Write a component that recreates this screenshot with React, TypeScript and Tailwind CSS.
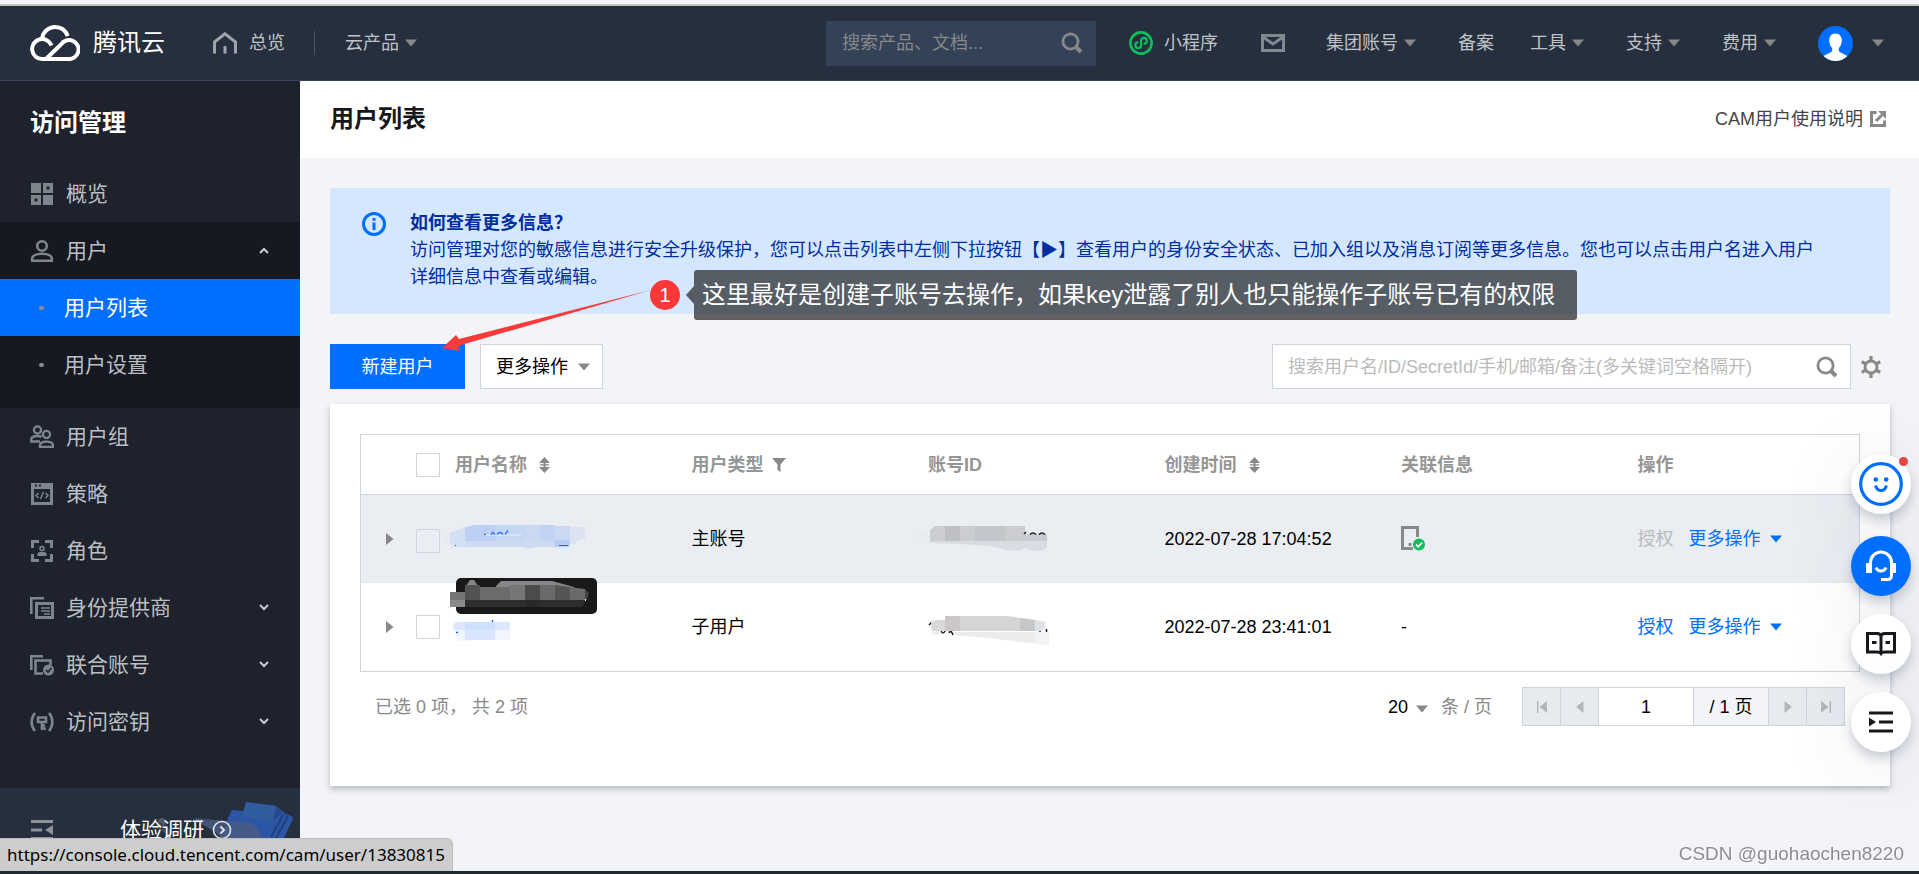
import React from "react";

function Caret({ className = "text-[#888]" }: { className?: string }) {
  return (
    <svg width="12" height="8" viewBox="0 0 12 8" className={`shrink-0 ${className}`} aria-hidden="true">
      <path d="M0 .5h12L6 7.5z" fill="currentColor" />
    </svg>
  );
}

function SearchIcon() {
  return (
    <svg width="22" height="22" viewBox="0 0 22 22" fill="none" stroke="currentColor" aria-hidden="true">
      <circle cx="9.5" cy="9.5" r="7.6" strokeWidth="2.8" />
      <path d="M15 15l5 5" strokeWidth="4" />
    </svg>
  );
}

function SortIcon() {
  return (
    <svg width="11" height="16" viewBox="0 0 11 16" fill="#888" aria-hidden="true">
      <path d="M5.5 0L11 6H0zM5.500 16L0 10h11zM4.500 5h2v6h-2zM1 7.200h9v1.400H1z" />
    </svg>
  );
}

function LogoIcon() {
  return (
    <svg width="50" height="36" viewBox="0 0 50 36" fill="none" stroke="#fff" strokeWidth="4" aria-hidden="true">
      <path d="M12 13.5C13 7 18.500 2 25 2c5.500 0 10.500 3.200 12.800 9" />
      <path d="M19.500 34H12A10 10 0 1 1 21.500 20.500" />
      <path d="M16 34L31 19.500a9.500 9.500 0 1 1 7 14.500H15" />
    </svg>
  );
}

function TopMenu({ label }: { label: string }) {
  return (
    <button type="button" className="flex items-center gap-1.5 whitespace-nowrap">
      {label}
      <Caret />
    </button>
  );
}

function TopBar() {
  return (
    <header className="flex h-[75px] shrink-0 items-center border-b border-[#36435c] bg-[#262f3e] pl-[30px] pr-[35px] text-lg text-[#bfc3c7]">
      <a href="#home" className="flex items-center gap-[13px] text-2xl text-white">
        <LogoIcon />
        腾讯云
      </a>
      <a href="#overview" className="ml-12 flex items-center gap-3">
        <svg width="24" height="22" viewBox="0 0 24 22" fill="none" stroke="#a0a4a8" strokeWidth="3" aria-hidden="true">
          <path d="M1.500 21.500V10L12 1.800 22.500 10v11.500M12 14v7.500" />
        </svg>
        总览
      </a>
      <span className="ml-[29px] mr-[30px] h-6 w-px bg-[#4d5768]" />
      <TopMenu label="云产品" />
      <div className="ml-auto flex items-center">
        <label className="flex h-[45px] w-[270px] items-center bg-[#344258] pl-4 pr-[13px] text-[#888]">
          <input
            type="search"
            aria-label="搜索产品、文档"
            placeholder="搜索产品、文档..."
            className="min-w-0 flex-1 bg-transparent outline-none placeholder:text-[#888]"
          />
          <SearchIcon />
        </label>
        <a href="#mini" className="ml-[33px] flex items-center gap-[11px]">
          <svg width="24" height="24" viewBox="0 0 24 24" fill="none" stroke="#0abf5b" aria-hidden="true">
            <circle cx="12" cy="12" r="10.600" strokeWidth="2.600" />
            <path d="M8.700 11.300a2.900 2.900 0 1 0 3.400 3.200V9.500a2.900 2.900 0 1 1 3.400 3.200" strokeWidth="2.200" strokeLinecap="round" />
          </svg>
          小程序
        </a>
        <button type="button" aria-label="消息" className="ml-[43px] mr-[41px]">
          <svg width="24" height="18" viewBox="0 0 24 18" fill="none" stroke="#7d8a8f" strokeWidth="3" aria-hidden="true">
            <path d="M1.500 1.500h21v15h-21zM2 3l10 7 10-7" />
          </svg>
        </button>
        <TopMenu label="集团账号" />
        <a href="#beian" className="ml-[42px] mr-9">备案</a>
        <div className="flex items-center gap-[42px]">
          <TopMenu label="工具" />
          <TopMenu label="支持" />
          <TopMenu label="费用" />
          <button type="button" aria-label="账号" className="flex items-center gap-[19px]">
            <svg width="35" height="35" viewBox="0 0 35 35" aria-hidden="true">
              <circle cx="17.500" cy="17.500" r="17.500" fill="#006eff" />
              <path d="M17.500 7.500c4 0 6.300 2.800 6.300 7 0 3.300-1.300 6-3 7.500v2.500c0 2 5 3 8.700 5.600a17 17 0 0 1-24 0c3.700-2.600 8.700-3.600 8.700-5.600V22c-1.700-1.500-3-4.200-3-7.500 0-4.200 2.300-7 6.300-7z" fill="#fff" />
            </svg>
            <Caret />
          </button>
        </div>
      </div>
    </header>
  );
}

const navIcons: Record<string, React.ReactNode> = {
  overview: (
    <path d="M1 1h10v10H1zM13 1h10v10H13zM16.500 4.500v3h3v-3zM1 13h10v10H1zM4.500 16.500v3h3v-3zM13 13h10v10H13z" fill="currentColor" fillRule="evenodd" />
  ),
  user: (
    <g fill="none" stroke="currentColor" strokeWidth="2.600">
      <circle cx="12" cy="7" r="4.800" />
      <path d="M2.200 21.800v-2c0-3 4-5 9.800-5s9.800 2 9.800 5v2z" />
    </g>
  ),
  group: (
    <g fill="none" stroke="currentColor" strokeWidth="2.300">
      <circle cx="7.500" cy="5" r="3.600" />
      <circle cx="16.500" cy="9.500" r="3.600" />
      <path d="M10 16.500H1.200v-1.700c0-2.500 3-3.800 6.300-3.800 1.500 0 3 .300 4 .900" />
      <path d="M10 21.800v-1.400c0-2.400 3-3.700 6.500-3.700s6.500 1.300 6.500 3.700v1.400z" />
    </g>
  ),
  policy: (
    <g>
      <path d="M1 1h22v22H1zM4 7v13h16V7z" fill="currentColor" fillRule="evenodd" />
      <path d="M5 3.500h2M9 3.500h2" stroke="#1e222d" strokeWidth="2" />
      <path d="M8.500 11L6 13.500 8.500 16M15.500 11l2.500 2.500-2.500 2.500M13.500 10l-3 7" fill="none" stroke="currentColor" strokeWidth="1.500" />
    </g>
  ),
  role: (
    <g>
      <path d="M2.500 9V2.500H9M15 2.500h6.500V9M21.500 15v6.500H15M9 21.500H2.500V15" fill="none" stroke="currentColor" strokeWidth="3" />
      <circle cx="12" cy="9.500" r="2" fill="none" stroke="currentColor" strokeWidth="1.600" />
      <path d="M7.500 17v-2c0-1.500 2-2.200 4.500-2.200s4.500.700 4.500 2.200v2z" fill="currentColor" />
    </g>
  ),
  provider: (
    <g fill="none" stroke="currentColor">
      <path d="M1.300 18V2.300H14" strokeWidth="2.600" />
      <path d="M6.500 7.500h16v14h-16z" strokeWidth="3" />
      <path d="M11 12h9M11 15h9M14 18h6" strokeWidth="1.500" />
    </g>
  ),
  union: (
    <g>
      <path d="M1.300 17V3.300H13M13 20.500H5.500V7.500h15V12" fill="none" stroke="currentColor" strokeWidth="2.600" />
      <circle cx="18.500" cy="17" r="5.500" fill="currentColor" />
      <path d="M16 17l2 2 3.500-4" fill="none" stroke="#1e222d" strokeWidth="1.600" />
    </g>
  ),
  key: (
    <g fill="none" stroke="currentColor">
      <path d="M5 3C.500 8 .500 16 5 21M19 3c4.500 5 4.500 13 0 18" strokeWidth="2.600" />
      <path d="M8 7.500h8v4.500H8z" strokeWidth="2.600" />
      <path d="M12 12v8M12 18.500h4M12 15.500h3" strokeWidth="2.600" />
    </g>
  ),
};

function Chevron({ up = false }: { up?: boolean }) {
  return (
    <svg width="10" height="8" viewBox="0 0 10 8" fill="none" stroke="#c8ccd0" strokeWidth="2" className="ml-auto" aria-hidden="true">
      <path d={up ? "M1 6l4-4 4 4" : "M1 1l4 4 4-4"} />
    </svg>
  );
}

function NavItem({ icon, label, arrow }: { icon: string; label: string; arrow?: "up" | "down" }) {
  return (
    <a href={`#${icon}`} className="flex h-[57px] items-center gap-3 pl-[30px] pr-[31px]">
      <svg width="24" height="24" viewBox="0 0 24 24" className="text-[#7d868c]" aria-hidden="true">
        {navIcons[icon]}
      </svg>
      {label}
      {arrow && <Chevron up={arrow === "up"} />}
    </a>
  );
}

function SubItem({ label, active = false }: { label: string; active?: boolean }) {
  return (
    <a
      href="#sub"
      className={`flex h-[57px] items-center gap-5 pl-[39px] ${active ? "bg-[#006eff] text-white" : ""}`}
    >
      <span className="h-1 w-[5px] rounded-full bg-[#868e94]" />
      {label}
    </a>
  );
}

function Sidebar() {
  return (
    <aside className="flex w-[300px] shrink-0 flex-col bg-[#1e222d] text-[21px] text-[#bbbfc3]">
      <h2 className="flex h-[84px] items-center pl-[30px] text-2xl font-bold text-white">访问管理</h2>
      <nav>
        <NavItem icon="overview" label="概览" />
        <div className="bg-[#161822] pb-[15px]">
          <NavItem icon="user" label="用户" arrow="up" />
          <SubItem label="用户列表" active />
          <SubItem label="用户设置" />
        </div>
        <NavItem icon="group" label="用户组" />
        <NavItem icon="policy" label="策略" />
        <NavItem icon="role" label="角色" />
        <NavItem icon="provider" label="身份提供商" arrow="down" />
        <NavItem icon="union" label="联合账号" arrow="down" />
        <NavItem icon="key" label="访问密钥" arrow="down" />
      </nav>
      <div className="relative mt-auto flex h-[83px] items-center bg-[#262f3e] pl-[31px] text-white">
        <svg width="148" height="52" viewBox="0 0 148 52" className="absolute right-0 top-0" aria-hidden="true">
          <path d="M76 30l4-8 12 1 4-8 28 3 10 8 5 2c2 1 2 3 1 5l-9 19H70z" fill="#2c56a3" />
          <path d="M94 14l30 4-3 15-31-5z" fill="#315da0" />
          <path d="M124 18l6 7-9 8z" fill="#27498c" />
          <path d="M136 28l-13 24M131 27l-12 22" stroke="#1f3f80" strokeWidth="2" />
          <path d="M41 30l57 5c8 2 8 10 14 17H70c-6-12-18-12-27-21z" fill="#4a5b83" opacity=".85" />
          <circle cx="10" cy="34" r="4" fill="#505a6a" />
          <path d="M8 34l14 10-4 4-14-8z" fill="#3b4554" />
        </svg>
        <button type="button" aria-label="收起菜单" className="text-[#8b9298]">
          <svg width="22" height="20" viewBox="0 0 22 20" aria-hidden="true">
            <path d="M0 1.500h22M0 10h11M0 18.500h22" stroke="currentColor" strokeWidth="3" />
            <path d="M22 5v10l-8-5z" fill="currentColor" />
          </svg>
        </button>
        <a href="#survey" className="relative ml-[67px] flex items-center gap-2">
          体验调研
          <svg width="20" height="20" viewBox="0 0 20 20" fill="none" stroke="#dfe3ea" strokeWidth="1.600" aria-hidden="true">
            <circle cx="10" cy="10" r="8.500" />
            <path d="M8.500 6.500L12 10l-3.500 3.500" strokeWidth="2" />
          </svg>
        </a>
      </div>
    </aside>
  );
}

function Callout() {
  return (
    <>
      <svg width="210" height="62" viewBox="0 0 210 62" className="absolute left-[112px] top-[102px] z-10" aria-hidden="true">
        <path d="M209 0L17 49l-3-4L0 58l18 3-2-4 3-2z" fill="#fb3a3a" />
      </svg>
      <div className="absolute left-[320px] top-[82px] z-10 flex w-max items-center">
        <span className="flex size-[30px] items-center justify-center rounded-full bg-[#fb3838] text-xl text-white">1</span>
        <svg width="8" height="18" viewBox="0 0 8 18" className="ml-1.5" aria-hidden="true">
          <path d="M8 0v18L0 9z" fill="#565c66" />
        </svg>
        <p className="flex h-[50px] items-center rounded-[3px] bg-[#121212]/65 pl-2 pr-[22px] text-2xl text-white">
          这里最好是创建子账号去操作，如果key泄露了别人也只能操作子账号已有的权限
        </p>
      </div>
    </>
  );
}

function Notice() {
  return (
    <section className="relative flex bg-[#d5e7ff] pb-[23px] pl-8 pr-[72px] pt-[22px] text-lg leading-[27px] text-[#002da0]">
      <svg width="24" height="24" viewBox="0 0 24 24" className="mr-6 mt-0.5 shrink-0" aria-hidden="true">
        <circle cx="12" cy="12" r="10.500" fill="none" stroke="#006eff" strokeWidth="3" />
        <path d="M10.500 10.500h3V18h-3zM10.500 6h3v2.700h-3z" fill="#006eff" />
      </svg>
      <div>
        <h3 className="font-bold">如何查看更多信息？</h3>
        <p>
          访问管理对您的敏感信息进行安全升级保护，您可以点击列表中左侧下拉按钮【▶】查看用户的身份安全状态、已加入组以及消息订阅等更多信息。您也可以点击用户名进入用户详细信息中查看或编辑。
        </p>
      </div>
      <Callout />
    </section>
  );
}

function Toolbar() {
  return (
    <div className="mt-[30px] flex h-[45px] items-stretch text-lg">
      <button type="button" className="w-[135px] bg-[#006eff] text-white">新建用户</button>
      <button type="button" className="ml-[15px] flex w-[123px] items-center justify-between border border-[#cfd5de] bg-white pl-[15px] pr-3 text-black">
        更多操作
        <Caret />
      </button>
      <label className="ml-auto flex w-[579px] items-center border border-[#cfd5de] bg-white pl-[15px] pr-3 text-[#888]">
        <input
          type="search"
          aria-label="搜索用户"
          placeholder="搜索用户名/ID/SecretId/手机/邮箱/备注(多关键词空格隔开)"
          className="min-w-0 flex-1 bg-transparent outline-none placeholder:text-[#bbb]"
        />
        <SearchIcon />
      </label>
      <button type="button" aria-label="设置" className="ml-2.5 mr-[9px]">
        <svg width="20" height="22" viewBox="0 0 20 22" fill="none" stroke="#888" aria-hidden="true">
          <circle cx="10" cy="11" r="6" strokeWidth="2.800" />
          <path d="M10 5V0M10 22v-5M4.800 8L.800 5.700M15.200 8l4-2.300M4.800 14l-4 2.300M15.200 14l4 2.300" strokeWidth="3.200" />
        </svg>
      </button>
    </div>
  );
}

function Check({ label, disabled = false }: { label: string; disabled?: boolean }) {
  return (
    <input
      type="checkbox"
      aria-label={label}
      disabled={disabled}
      className="block size-6 appearance-none border border-[#cfd5de] bg-transparent"
    />
  );
}

function Expander() {
  return (
    <button type="button" aria-label="展开" className="block">
      <svg width="8" height="12" viewBox="0 0 8 12" aria-hidden="true">
        <path d="M0 0l7.500 6L0 12z" fill="#888" />
      </svg>
    </button>
  );
}

function Actions({ disabled = false }: { disabled?: boolean }) {
  return (
    <div className="flex items-center text-[#006eff]">
      <button type="button" disabled={disabled} className="disabled:text-[#bbb]">授权</button>
      <button type="button" className="ml-[15px] flex items-center gap-[9px]">
        更多操作
        <Caret className="text-[#006eff]" />
      </button>
    </div>
  );
}

function MaskedOwnerName() {
  return (
    <svg width="144" height="24" viewBox="0 0 144 24" className="-ml-3 -mt-1 block" aria-hidden="true">
      <path d="M0 13l5-5h3v11H2z" fill="#e6ebf2" />
      <path d="M7 8l15-6v20H10l-3-5z" fill="#d3dff2" />
      <path d="M22 2l10-2h22v22H22z" fill="#bdd0f3" />
      <path d="M52 0h45v22H52z" fill="#c5d6f3" />
      <path d="M82 0h15v22H82zM112 1h15v17h-15z" fill="#cad8f2" />
      <path d="M97 0h15v22H97z" fill="#c2d3f3" />
      <path d="M127 2h15v12l-7 1-3 4h-5z" fill="#dbe3f1" />
      <path d="M22 16h90v6H92l-2 1h-8l-2-1H22z" fill="#ccdaf2" />
      <path d="M112 15h15v7h-15z" fill="#b5cdf5" />
      <path d="M41 10h37" stroke="#eaf0fb" />
      <path d="M41 9.500h2M48 9.500l2-2 2 2M54 9.500q3-4 6 0M62 9.500l3-4" stroke="#2c74f5" strokeWidth="1.300" fill="none" />
      <path d="M116 20.500h9M12 20.500h1" stroke="#006eff" />
    </svg>
  );
}

function MaskedSubName() {
  return (
    <svg width="58" height="24" viewBox="0 0 58 24" className="-ml-0.5 mt-2 block" aria-hidden="true">
      <path d="M2 3h55v8H1L0 8z" fill="#dbe7ff" />
      <path d="M12 3h30v8H12z" fill="#cfe0ff" />
      <path d="M2 11h55v10H19l-4 1H4z" fill="#f0f5ff" />
      <path d="M12 11h30v10H12z" fill="#d9e5ff" />
      <path d="M39.500 1v2M3 13.500h2" stroke="#006eff" strokeWidth="1.500" />
    </svg>
  );
}

function NameTooltip() {
  return (
    <div role="tooltip" className="absolute -top-[5px] left-2.5">
      <svg width="148" height="36" viewBox="0 0 148 36" aria-hidden="true">
        <rect x="6" width="141" height="36" rx="5" fill="#191919" />
        <path d="M16 8l4-6h4l4 6v3H16zM46 8l5-5h51l22 6v3H46z" fill="#87878a" />
        <path d="M0 14h15v8H0z" fill="#757575" />
        <path d="M0 22h15v7H0z" fill="#8a8a8a" />
        <path d="M15 7h15v15H15z" fill="#525252" />
        <path d="M30 9h30V7h15v15H30z" fill="#6c6c6c" />
        <path d="M60 7h15v15H60z" fill="#777" />
        <path d="M75 7h15v15H75z" fill="#4c4c4c" />
        <path d="M90 7h15v15H90zM120 9l15 2v11h-15z" fill="#6a6a6a" />
        <path d="M105 7l15 2v13h-15z" fill="#555" />
        <path d="M135 11l4 4-2 7h-2z" fill="#444" />
        <path d="M15 22h120l-1 5-3 2H15z" fill="#2e2e2e" />
        <path d="M75 22h15v7H75z" fill="#292929" />
        <path d="M135.500 21v2" stroke="#eee" />
      </svg>
    </div>
  );
}

function MaskedOwnerId() {
  return (
    <svg width="129" height="26" viewBox="0 0 129 26" className="-ml-[9px] block" aria-hidden="true">
      <path d="M0 5h11v11H1z" fill="#e8ecef" />
      <path d="M11 4l5-4h10v15H11zM41 0h15v15H41zM86 0h20v15H86z" fill="#cccdd1" />
      <path d="M26 0h15v15H26z" fill="#bfc0c4" />
      <path d="M56 0h30v15H56z" fill="#c3c6cb" />
      <path d="M104 8h24v8h-24z" fill="#c9cbd0" />
      <path d="M11 15h117v7l-5 3h-8l-10-3-5 3-14-1-15-4-30-2-30-1z" fill="#d9dce2" />
      <path d="M105 8l2-2M111 8.500q3-3 6 0M120 8.500q3-3 6 0" fill="none" stroke="#1a1a1a" strokeWidth="1.500" />
    </svg>
  );
}

function MaskedSubId() {
  return (
    <svg width="123" height="30" viewBox="0 0 123 30" className="mt-2 block" aria-hidden="true">
      <path d="M1 9l3-3M13 15q2 4 4 0M21 17q2-4 4 2M118.500 13v3M111 15h2" fill="none" stroke="#1a1a1a" strokeWidth="1.500" />
      <path d="M3 6l5-2h9v11H4z" fill="#d8d8d8" />
      <path d="M17 0h15v15H17z" fill="#cac6c9" />
      <path d="M32 0h47l28 4v11H32z" fill="#d5d5d5" />
      <path d="M92 2l15 2v11H92z" fill="#c8c8c8" />
      <path d="M107 4l10 2v6l-3 3h-7z" fill="#dde0e4" />
      <path d="M4 16h8l2 2-9 1zM27 16h94v13L60 22l-33-3z" fill="#ececec" />
      <path d="M107 16h14v13l-14-2z" fill="#f3f3f3" />
    </svg>
  );
}

function VerifiedPhone() {
  return (
    <svg width="25" height="25" viewBox="0 0 25 25" role="img" aria-label="已验证手机" className="block">
      <path d="M16.500 11V1.500h-15v21H12" fill="none" stroke="#888" strokeWidth="3" />
      <path d="M7.500 17h3v3h-3z" fill="#888" />
      <circle cx="18" cy="18.500" r="6" fill="#0abf5b" />
      <path d="M15 18.500l2.200 2.200 4-4.200" fill="none" stroke="#fff" strokeWidth="1.800" />
    </svg>
  );
}

function PagerButton({ label, d }: { label: string; d: string }) {
  return (
    <button type="button" disabled aria-label={label} className="flex w-[37px] items-center justify-center bg-[#e7eaef]">
      <svg width="12" height="12" viewBox="0 0 12 12" fill="#b4b6ba" aria-hidden="true">
        <path d={d} />
      </svg>
    </button>
  );
}

function UserTable() {
  return (
    <section className="mt-[15px] bg-white px-[30px] pb-[60px] pt-[30px] text-lg shadow-[0_3px_6px_rgba(54,58,80,0.32)]">
      <div className="border border-[#cfd5de]">
        <table className="w-full table-fixed border-separate border-spacing-0 text-left text-black [&_td]:p-0 [&_th]:border-b [&_th]:border-[#cfd5de] [&_th]:p-0">
          <thead>
            <tr className="h-[60px] text-[#969696]">
              <th className="w-10" aria-label="展开" />
              <th className="w-[39px]">
                <div className="pl-[15px]"><Check label="全选" /></div>
              </th>
              <th>
                <div className="flex items-center gap-3 pl-[15px]">用户名称<SortIcon /></div>
              </th>
              <th>
                <div className="flex items-center gap-2 pl-[15px]">
                  用户类型
                  <svg width="14" height="14" viewBox="0 0 14 14" fill="#888" aria-hidden="true">
                    <path d="M0 0h14L8.500 6.500V14l-3-2V6.500z" />
                  </svg>
                </div>
              </th>
              <th><div className="pl-[15px]">账号ID</div></th>
              <th>
                <div className="flex items-center gap-3 pl-[15px]">创建时间<SortIcon /></div>
              </th>
              <th><div className="pl-[15px]">关联信息</div></th>
              <th><div className="pl-[15px]">操作</div></th>
            </tr>
          </thead>
          <tbody>
            <tr className="h-[88px] bg-[#eaedf2] [&>td]:border-b [&>td]:border-[#e5e8ed]">
              <td><div className="pl-[25px]"><Expander /></div></td>
              <td><div className="pl-[15px] pt-1"><Check label="选择主账号" disabled /></div></td>
              <td><a href="#owner" aria-label="主账号详情" className="block pl-[15px]"><MaskedOwnerName /></a></td>
              <td><div className="pl-[15px]">主账号</div></td>
              <td><div className="pl-[15px]"><MaskedOwnerId /></div></td>
              <td><div className="pl-[15px]">2022-07-28 17:04:52</div></td>
              <td><div className="pl-[15px]"><VerifiedPhone /></div></td>
              <td><div className="pl-[15px]"><Actions disabled /></div></td>
            </tr>
            <tr className="h-[88px]">
              <td><div className="pl-[25px]"><Expander /></div></td>
              <td><div className="pl-[15px]"><Check label="选择子用户" /></div></td>
              <td className="relative">
                <NameTooltip />
                <a href="#sub-user" aria-label="子用户详情" className="block pl-[15px]"><MaskedSubName /></a>
              </td>
              <td><div className="pl-[15px]">子用户</div></td>
              <td><div className="pl-[15px]"><MaskedSubId /></div></td>
              <td><div className="pl-[15px]">2022-07-28 23:41:01</div></td>
              <td><div className="pl-[15px]">-</div></td>
              <td><div className="pl-[15px]"><Actions /></div></td>
            </tr>
          </tbody>
        </table>
      </div>
      <div className="mt-[15px] flex h-[39px] items-center pl-[15px] pr-[15px] text-[#888]">
        <p>已选 0 项， 共 2 项</p>
        <label className="relative ml-auto flex items-center">
          <select className="w-[53px] appearance-none bg-transparent text-black outline-none">
            <option>20</option>
          </select>
          <Caret className="absolute left-[28px] top-3 text-[#888]" />
          条 / 页
        </label>
        <div className="ml-[30px] flex h-[39px] gap-px border border-[#cfd5de] bg-[#cfd5de]">
          <PagerButton label="第一页" d="M1 0h1.500v12H1zM11 0v12L3.500 6z" />
          <PagerButton label="上一页" d="M9.500 0v12L2 6z" />
          <input aria-label="页码" defaultValue="1" className="w-[94px] bg-white text-center text-black outline-none" />
          <span className="flex w-[74px] items-center justify-center bg-[#f3f4f8] text-black">/ 1 页</span>
          <PagerButton label="下一页" d="M2.500 0v12L10 6z" />
          <PagerButton label="最后一页" d="M1 0v12l7.500-6zM9.500 0H11v12H9.500z" />
        </div>
      </div>
    </section>
  );
}

function FloatButton({ label, primary = false, children }: { label: string; primary?: boolean; children: React.ReactNode }) {
  return (
    <button
      type="button"
      aria-label={label}
      className={`relative flex size-[60px] items-center justify-center rounded-full shadow-[0_6px_12px_rgba(54,68,100,0.25),0_12px_80px_rgba(54,58,80,0.12)] ${primary ? "mt-1 bg-[#006eff]" : "bg-white"}`}
    >
      {children}
    </button>
  );
}

function FloatBar() {
  return (
    <div className="fixed right-2 top-[454px] flex flex-col gap-[18px]">
      <FloatButton label="智能助手">
        <svg width="44" height="44" viewBox="0 0 44 44" fill="none" stroke="#006eff" aria-hidden="true">
          <circle cx="22" cy="22" r="20.300" strokeWidth="3.200" />
          <path d="M16.500 23.500c1 3.300 3 5 5.500 5s4.500-1.700 5.500-5" strokeWidth="3" />
          <circle cx="16.800" cy="17.500" r="2.300" fill="#006eff" stroke="none" />
          <circle cx="27.200" cy="17.500" r="2.300" fill="#006eff" stroke="none" />
        </svg>
        <span className="absolute right-[3px] top-[3px] size-[9px] rounded-full bg-[#e54545]" />
      </FloatButton>
      <FloatButton label="在线客服" primary>
        <svg width="32" height="32" viewBox="0 0 32 32" fill="none" stroke="#fff" strokeWidth="3" aria-hidden="true">
          <path d="M5.500 23V12.500a10.500 10.500 0 0 1 21 0V25c0 3-1.500 4.500-4 4.500H16" />
          <path d="M3 13v10M29 13v10" strokeWidth="4" />
          <path d="M11 17.500c1 2.500 2.700 3.500 5 3.500s4-1 5-3.500" />
        </svg>
      </FloatButton>
      <FloatButton label="文档">
        <svg width="30" height="26" viewBox="0 0 30 26" fill="none" stroke="#16181c" aria-hidden="true">
          <path d="M15 22.500c-1-1.500-2-1.500-4-1.500H1.500V2.500H11c2.500 0 4 1 4 3 0-2 1.500-3 4-3h9.500V21H19c-2 0-3 0-4 1.500zM15 5v17" strokeWidth="3" />
          <path d="M6 11.500h4.500M19.500 11.500H24" strokeWidth="3" />
        </svg>
      </FloatButton>
      <FloatButton label="收起工具栏">
        <svg width="24" height="22" viewBox="0 0 24 22" aria-hidden="true">
          <path d="M0 2h24M10 11h14M0 20h24" stroke="#16181c" strokeWidth="3" />
          <path d="M0 6.500v9l7-4.500z" fill="#16181c" />
        </svg>
      </FloatButton>
    </div>
  );
}

export default function App() {
  return (
    <div className="flex h-screen flex-col overflow-hidden bg-[#f3f4f8] font-['Liberation_Sans','Noto_Sans_CJK_SC',sans-serif]">
      <div className="h-1.5 shrink-0 border-b-2 border-[#c0c3c2] bg-[#f5f5f5]" />
      <TopBar />
      <div className="flex min-h-0 flex-1">
        <Sidebar />
        <div className="flex min-w-0 flex-1 flex-col">
          <div className="flex h-[77px] shrink-0 items-center justify-between bg-white pb-0.5 pl-[30px] pr-[33px]">
            <h1 className="text-2xl font-bold text-[#16181c]">用户列表</h1>
            <a href="#docs" className="flex items-center gap-[7px] text-lg text-[#444]">
              CAM用户使用说明
              <svg width="16" height="16" viewBox="0 0 16 16" fill="none" stroke="#888" strokeWidth="3" aria-hidden="true">
                <path d="M6.500 1.500h-5v13h13v-5M6 10l6-6" />
                <path d="M8 0h8v8z" fill="#888" stroke="none" />
              </svg>
            </a>
          </div>
          <main className="flex-1 py-[30px] pl-[30px] pr-[29px]">
            <Notice />
            <Toolbar />
            <UserTable />
          </main>
        </div>
      </div>
      <div className="h-[3px] shrink-0 bg-[#1f2b33]" />
      <FloatBar />
      <p className="fixed bottom-1.5 right-[15px] text-[19px] text-[#8b8d92] [text-shadow:1px_1px_0_#fff]">CSDN @guohaochen8220</p>
      <div className="fixed bottom-[3px] left-0 flex h-[33px] items-center rounded-tr-md border-r border-t border-[#bdbdbd] bg-[#cdcdcd] px-[7px] font-['Noto_Sans',sans-serif] text-[17px] text-black">
        https://console.cloud.tencent.com/cam/user/13830815
      </div>
    </div>
  );
}
